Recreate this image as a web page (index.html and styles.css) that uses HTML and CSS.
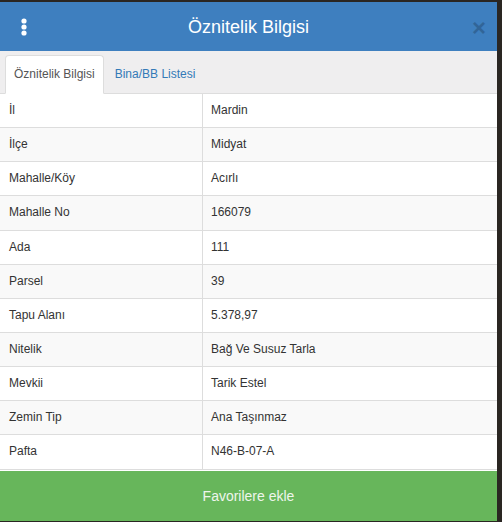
FILE: index.html
```html
<!DOCTYPE html>
<html lang="tr">
<head>
<meta charset="utf-8">
<title>Öznitelik Bilgisi</title>
<link rel="stylesheet" href="styles.css">
</head>
<body>
<div class="panel">
  <div class="header">
    <div class="menu">
      <svg width="6" height="18" viewBox="0 0 6 18"><circle cx="3" cy="3" r="2.6" fill="#fff"/><circle cx="3" cy="9" r="2.6" fill="#fff"/><circle cx="3" cy="15" r="2.6" fill="#fff"/></svg>
    </div>
    <div class="title">Öznitelik Bilgisi</div>
    <div class="close">×</div>
  </div>
  <div class="tabs">
    <div class="tab active">Öznitelik Bilgisi</div>
    <div class="tab">Bina/BB Listesi</div>
  </div>
  <table class="attrs">
    <tr><td>İl</td><td>Mardin</td></tr>
    <tr><td>İlçe</td><td>Midyat</td></tr>
    <tr><td>Mahalle/Köy</td><td>Acırlı</td></tr>
    <tr><td>Mahalle No</td><td>166079</td></tr>
    <tr><td>Ada</td><td>111</td></tr>
    <tr><td>Parsel</td><td>39</td></tr>
    <tr><td>Tapu Alanı</td><td>5.378,97</td></tr>
    <tr><td>Nitelik</td><td>Bağ Ve Susuz Tarla</td></tr>
    <tr><td>Mevkii</td><td>Tarik Estel</td></tr>
    <tr><td>Zemin Tip</td><td>Ana Taşınmaz</td></tr>
    <tr><td>Pafta</td><td>N46-B-07-A</td></tr>
  </table>
  <div class="fav">Favorilere ekle</div>
</div>
</body>
</html>
```
FILE: styles.css
```css
html, body {
  margin: 0;
  padding: 0;
}
body {
  background: #2a2622;
  font-family: "Liberation Sans", Arial, sans-serif;
  color: #333;
  height: 522px;
  overflow: hidden;
}
.panel {
  width: 497px;
  margin-top: 2px;
  background: #fff;
}
.header {
  height: 49px;
  background: #3e7fbf;
  display: grid;
  grid-template-columns: 60px 1fr 60px;
  align-items: center;
}
.menu {
  display: flex;
  padding-left: 21px;
  padding-top: 1px;
}
.menu svg {
  display: block;
}
.title {
  text-align: center;
  color: #fff;
  font-size: 18px;
  padding-top: 1px;
}
.close {
  text-align: right;
  padding-right: 11px;
  font-size: 24px;
  font-weight: bold;
  color: #000;
  opacity: 0.2;
  line-height: 1;
  padding-top: 3px;
}
.tabs {
  height: 39px;
  padding: 3px 0 0 5px;
  background: #efeeef;
  border-bottom: 1px solid #ddd;
  display: flex;
  align-items: flex-end;
}
.tab {
  font-size: 12px;
  line-height: 17px;
  padding: 10px 8px 10px 8px;
  border: 1px solid transparent;
  border-radius: 4px 4px 0 0;
  margin-right: 2px;
  margin-bottom: -1px;
  color: #337ab7;
}
.tab.active {
  background: #fff;
  border-color: #ddd;
  border-bottom-color: #fff;
  color: #555;
}
.attrs {
  width: 497px;
  border-collapse: collapse;
  font-size: 12px;
  line-height: 1.42857;
}
.attrs td {
  padding: 8px;
  border: 1px solid #ddd;
  border-top: none;
}
.attrs td:first-child {
  width: 185px;
  padding-left: 9px;
  border-left: none;
}
.attrs td:last-child {
  border-right: none;
}
.attrs tr:nth-child(even) td {
  background: #f9f9f9;
}
.fav {
  margin-top: 1px;
  height: 50px;
  background: #67b65b;
  color: #eef5ec;
  font-size: 14px;
  display: flex;
  align-items: center;
  justify-content: center;
}
```
